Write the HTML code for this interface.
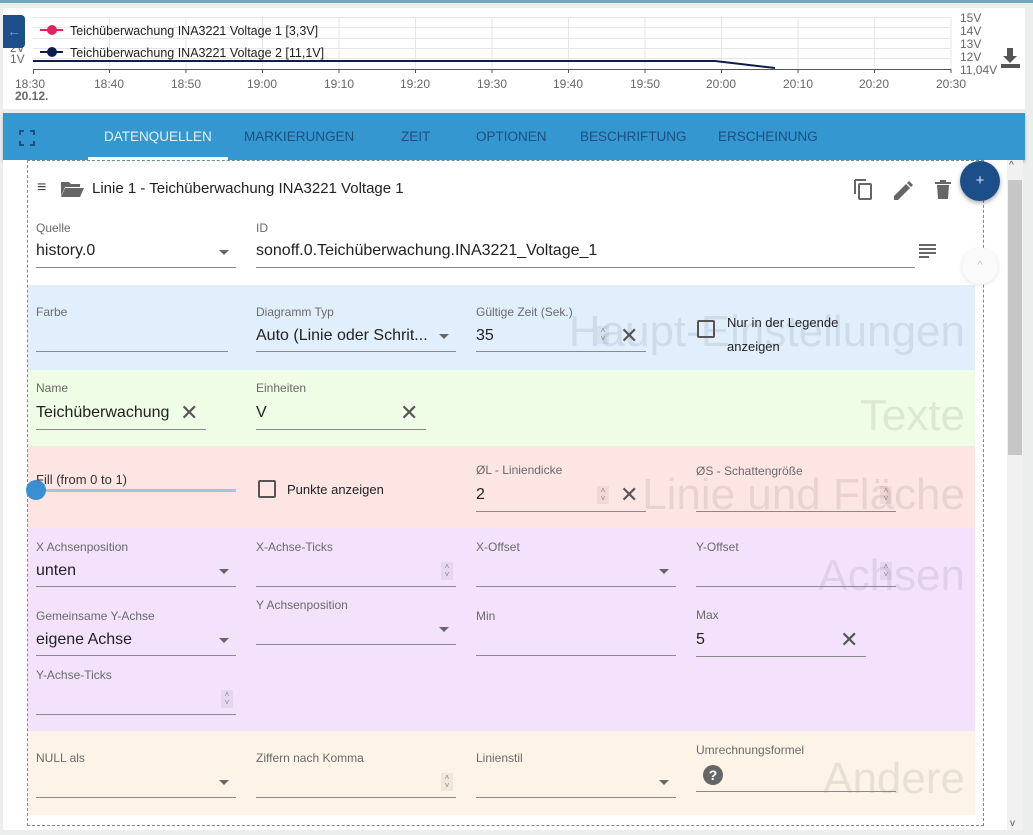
<!DOCTYPE html>
<html><head><meta charset="utf-8"><style>
*{margin:0;padding:0;box-sizing:border-box}
body{width:1033px;height:835px;overflow:hidden;background:#eceeee;font-family:"Liberation Sans",Arial,sans-serif;position:relative}
.a{position:absolute}
.lbl{position:absolute;font-size:12px;color:#6a6a6a;white-space:nowrap}
.val{position:absolute;font-size:16px;color:#222;white-space:nowrap}
.ul{position:absolute;height:1px;background:#8a8a8a}
.arr{position:absolute;width:0;height:0;border-left:5px solid transparent;border-right:5px solid transparent;border-top:5px solid #666}
.x{position:absolute;font-size:22px;color:#555;line-height:20px;font-weight:300}
.sp{position:absolute;width:12px;height:18px;background:rgba(0,0,0,0.05);font-size:8px;color:#888;text-align:center;line-height:8px;padding-top:1px}
.wm{position:absolute;right:68px;font-size:44px;color:rgba(0,0,0,0.08);white-space:nowrap}
.tab{position:absolute;top:129px;font-size:13.5px;color:#1d4f80;letter-spacing:0}
.cb{position:absolute;width:18px;height:18px;border:2px solid #555;border-radius:2px}
</style></head><body>
<div class="a" style="left:0;top:0;width:1033px;height:3px;background:#6fa8b8"></div>
<div class="a" style="left:3px;top:8px;width:1022px;height:101px;background:#fff"></div>
<svg class="a" style="left:0;top:0" width="1033" height="110">
<g stroke="#e6e6e6" stroke-width="1">
<line x1="33" y1="17.5" x2="951" y2="17.5"/><line x1="33" y1="27.5" x2="951" y2="27.5"/><line x1="33" y1="38.5" x2="951" y2="38.5"/><line x1="33" y1="48.5" x2="951" y2="48.5"/><line x1="33" y1="58.5" x2="951" y2="58.5"/>
<line x1="109.5" y1="17" x2="109.5" y2="69"/><line x1="186" y1="17" x2="186" y2="69"/><line x1="262.5" y1="17" x2="262.5" y2="69"/><line x1="339" y1="17" x2="339" y2="69"/><line x1="415.5" y1="17" x2="415.5" y2="69"/><line x1="492" y1="17" x2="492" y2="69"/><line x1="568.5" y1="17" x2="568.5" y2="69"/><line x1="645" y1="17" x2="645" y2="69"/><line x1="721.5" y1="17" x2="721.5" y2="69"/><line x1="798" y1="17" x2="798" y2="69"/><line x1="874.5" y1="17" x2="874.5" y2="69"/><line x1="951" y1="17" x2="951" y2="69"/>
</g>
<line x1="33" y1="69.5" x2="951" y2="69.5" stroke="#555"/>
<g stroke="#555"><line x1="33.5" y1="69" x2="33.5" y2="74"/><line x1="109.5" y1="69" x2="109.5" y2="73"/><line x1="186" y1="69" x2="186" y2="73"/><line x1="262.5" y1="69" x2="262.5" y2="73"/><line x1="339" y1="69" x2="339" y2="73"/><line x1="415.5" y1="69" x2="415.5" y2="73"/><line x1="492" y1="69" x2="492" y2="73"/><line x1="568.5" y1="69" x2="568.5" y2="73"/><line x1="645" y1="69" x2="645" y2="73"/><line x1="721.5" y1="69" x2="721.5" y2="73"/><line x1="798" y1="69" x2="798" y2="73"/><line x1="874.5" y1="69" x2="874.5" y2="73"/><line x1="951" y1="69" x2="951" y2="73"/></g>
<polyline points="33,61 715,61 775,68" fill="none" stroke="#0e1e4a" stroke-width="2"/>
<line x1="40" y1="30" x2="63" y2="30" stroke="#e0245e" stroke-width="2"/><circle cx="52" cy="30" r="5" fill="#e0245e"/>
<line x1="40" y1="52" x2="63" y2="52" stroke="#0e1e4a" stroke-width="2"/><circle cx="52" cy="52" r="5" fill="#0e1e4a"/>
<g font-family="Liberation Sans" font-size="12" fill="#666">
<text x="10" y="52">2V</text><text x="10" y="63">1V</text>
<text x="15" y="88">18:30</text><text x="94" y="88">18:40</text><text x="171" y="88">18:50</text><text x="247" y="88">19:00</text><text x="324" y="88">19:10</text><text x="400" y="88">19:20</text><text x="477" y="88">19:30</text><text x="553" y="88">19:40</text><text x="630" y="88">19:50</text><text x="706" y="88">20:00</text><text x="783" y="88">20:10</text><text x="859" y="88">20:20</text><text x="936" y="88">20:30</text>
<text x="960" y="22">15V</text><text x="960" y="35">14V</text><text x="960" y="48">13V</text><text x="960" y="61">12V</text><text x="960" y="74">11,04V</text>
</g>
<text x="15" y="100" font-family="Liberation Sans" font-size="12" font-weight="bold" fill="#666">20.12.</text>
<g font-family="Liberation Sans" font-size="12.5" fill="#222"><text x="70" y="35">Teichüberwachung INA3221 Voltage  1 [3,3V]</text><text x="70" y="57">Teichüberwachung INA3221 Voltage  2 [11,1V]</text></g>
<path d="M1007 48h6v8h4l-7 7-7-7h4z" fill="#555"/><rect x="1001" y="64" width="19" height="4" fill="#555"/>
</svg>
<div class="a" style="left:3px;top:15px;width:22px;height:33px;background:#1c4f8a;border-radius:0 4px 4px 0;color:#6aa8e0;font-size:14px;text-align:center;line-height:32px">←</div>
<div class="a" style="left:3px;top:113px;width:1022px;height:47px;background:#3497d0;box-shadow:0 2px 3px rgba(0,0,0,.25)"></div>
<svg class="a" style="left:19px;top:130px" width="16" height="16"><path d="M1 5V1h4M11 1h4v4M15 11v4h-4M5 15H1v-4" fill="none" stroke="#1d4f80" stroke-width="2"/></svg>
<div class="tab" style="left:104px;color:#e2f2ff">DATENQUELLEN</div>
<div class="a" style="left:88px;top:157px;width:140px;height:3px;background:#fff"></div>
<div class="tab" style="left:244px">MARKIERUNGEN</div>
<div class="tab" style="left:401px">ZEIT</div>
<div class="tab" style="left:476px">OPTIONEN</div>
<div class="tab" style="left:580px">BESCHRIFTUNG</div>
<div class="tab" style="left:718px">ERSCHEINUNG</div>
<div class="a" style="left:3px;top:160px;width:1005px;height:670px;background:#fff"></div>
<div class="a" style="left:1007px;top:160px;width:16px;height:670px;background:#f1f1f1"></div>
<div class="a" style="left:1008px;top:180px;width:14px;height:275px;background:#c6c6c6"></div>
<div class="a" style="left:1009px;top:160px;font-size:10px;color:#555">^</div>
<div class="a" style="left:1010px;top:818px;font-size:10px;color:#555">v</div>
<div class="a" style="left:27px;top:160px;width:957px;height:666px;border:1px dashed #888;border-top-color:#6a8aa0"></div>
<div class="a" style="left:28px;top:285px;width:947px;height:85px;background:#e1eefc"></div>
<div class="a" style="left:28px;top:370px;width:947px;height:76px;background:#effce6"></div>
<div class="a" style="left:28px;top:446px;width:947px;height:82px;background:#fde5e3"></div>
<div class="a" style="left:28px;top:528px;width:947px;height:203px;background:#f4e2fc"></div>
<div class="a" style="left:28px;top:731px;width:947px;height:84px;background:#fdf3e6"></div>
<div class="wm" style="top:307px">Haupt-Einstellungen</div>
<div class="wm" style="top:391px">Texte</div>
<div class="wm" style="top:470px">Linie und Fläche</div>
<div class="wm" style="top:551px">Achsen</div>
<div class="wm" style="top:754px;right:68px">Andere</div>
<div class="a" style="left:37px;top:179px;font-size:16px;color:#444">≡</div>
<svg class="a" style="left:60px;top:180px" width="25" height="18"><path d="M1 2h8l2 2h9v3H5L1 16z" fill="#666"/><path d="M5 8h19l-4 9H1z" fill="#666"/></svg>
<div class="a" style="left:92px;top:180px;font-size:15px;color:#222">Linie 1 - Teichüberwachung INA3221 Voltage 1</div>
<svg class="a" style="left:852px;top:178px" width="22" height="24"><path d="M3 2h11M3 2v14" stroke="#666" stroke-width="2" fill="none"/><rect x="7" y="6" width="12" height="15" rx="1" stroke="#666" stroke-width="2" fill="none"/></svg>
<svg class="a" style="left:892px;top:180px" width="22" height="22"><path d="M2 20v-4L14 4l4 4L6 20z" fill="#666"/><path d="M15 3l2-2 4 4-2 2z" fill="#666"/></svg>
<svg class="a" style="left:934px;top:179px" width="18" height="22"><rect x="1" y="3" width="16" height="2" fill="#666"/><rect x="6" y="1" width="6" height="2" fill="#666"/><path d="M3 6h12l-1 14H4z" fill="#666"/></svg>
<div class="a" style="left:960px;top:161px;width:40px;height:40px;border-radius:50%;background:#1c4f8a;box-shadow:0 2px 5px rgba(0,0,0,.35);color:#cfe4ff;text-align:center;line-height:40px;font-size:15px">+</div>
<div class="a" style="left:962px;top:248px;width:36px;height:36px;border-radius:50%;background:#fafafa;box-shadow:0 1px 4px rgba(0,0,0,.12);color:#bbb;text-align:center;line-height:36px;font-size:10px">^</div>
<div class="lbl" style="left:36px;top:221px">Quelle</div><div class="val" style="left:36px;top:242px">history.0</div><div class="arr" style="left:219px;top:250px"></div><div class="ul" style="left:36px;top:267px;width:200px"></div>
<div class="lbl" style="left:256px;top:221px">ID</div><div class="val" style="left:256px;top:242px">sonoff.0.Teichüberwachung.INA3221_Voltage_1</div><div class="ul" style="left:256px;top:267px;width:659px"></div>
<svg class="a" style="left:919px;top:243px" width="18" height="16"><g fill="#666"><rect y="1" width="17" height="2"/><rect y="5" width="17" height="2"/><rect y="9" width="17" height="2"/><rect y="13" width="10" height="2"/></g></svg>
<div class="lbl" style="left:36px;top:305px">Farbe</div><div class="ul" style="left:36px;top:351px;width:192px"></div>
<div class="lbl" style="left:256px;top:305px">Diagramm Typ</div><div class="val" style="left:256px;top:327px">Auto (Linie oder Schrit...</div><div class="arr" style="left:439px;top:334px"></div><div class="ul" style="left:256px;top:351px;width:200px"></div>
<div class="lbl" style="left:476px;top:305px">Gültige Zeit (Sek.)</div><div class="val" style="left:476px;top:327px">35</div><div class="sp" style="left:597px;top:326px">˄<br>˅</div><div class="x" style="left:620px;top:326px">✕</div><div class="ul" style="left:476px;top:351px;width:170px"></div>
<div class="cb" style="left:697px;top:320px"></div><div class="a" style="left:727px;top:311px;font-size:13px;color:#222;line-height:24px">Nur in der Legende<br>anzeigen</div>
<div class="lbl" style="left:36px;top:381px">Name</div><div class="val" style="left:36px;top:404px">Teichüberwachung</div><div class="x" style="left:180px;top:403px">✕</div><div class="ul" style="left:36px;top:429px;width:170px"></div>
<div class="lbl" style="left:256px;top:381px">Einheiten</div><div class="val" style="left:256px;top:404px">V</div><div class="x" style="left:400px;top:403px">✕</div><div class="ul" style="left:256px;top:429px;width:170px"></div>
<div class="a" style="left:36px;top:472px;font-size:13px;color:#333">Fill (from 0 to 1)</div>
<div class="a" style="left:36px;top:489px;width:200px;height:3px;background:#a8c4dc"></div>
<div class="a" style="left:26px;top:480px;width:20px;height:20px;border-radius:50%;background:#3a8fd0"></div>
<div class="cb" style="left:258px;top:480px"></div><div class="a" style="left:287px;top:482px;font-size:13px;color:#222">Punkte anzeigen</div>
<div class="lbl" style="left:476px;top:463px">ØL - Liniendicke</div><div class="val" style="left:476px;top:486px">2</div><div class="sp" style="left:597px;top:486px">˄<br>˅</div><div class="x" style="left:620px;top:485px">✕</div><div class="ul" style="left:476px;top:511px;width:170px"></div>
<div class="lbl" style="left:696px;top:464px">ØS - Schattengröße</div><div class="sp" style="left:880px;top:486px">˄<br>˅</div><div class="ul" style="left:696px;top:511px;width:200px"></div>
<div class="lbl" style="left:36px;top:540px">X Achsenposition</div><div class="val" style="left:36px;top:562px">unten</div><div class="arr" style="left:219px;top:569px"></div><div class="ul" style="left:36px;top:586px;width:200px"></div>
<div class="lbl" style="left:256px;top:540px">X-Achse-Ticks</div><div class="sp" style="left:441px;top:562px">˄<br>˅</div><div class="ul" style="left:256px;top:586px;width:200px"></div>
<div class="lbl" style="left:476px;top:540px">X-Offset</div><div class="arr" style="left:659px;top:569px"></div><div class="ul" style="left:476px;top:586px;width:200px"></div>
<div class="lbl" style="left:696px;top:540px">Y-Offset</div><div class="sp" style="left:880px;top:562px">˄<br>˅</div><div class="ul" style="left:696px;top:586px;width:200px"></div>
<div class="lbl" style="left:36px;top:609px">Gemeinsame Y-Achse</div><div class="val" style="left:36px;top:631px">eigene Achse</div><div class="arr" style="left:219px;top:638px"></div><div class="ul" style="left:36px;top:655px;width:200px"></div>
<div class="lbl" style="left:256px;top:598px">Y Achsenposition</div><div class="arr" style="left:439px;top:627px"></div><div class="ul" style="left:256px;top:644px;width:200px"></div>
<div class="lbl" style="left:476px;top:609px">Min</div><div class="ul" style="left:476px;top:655px;width:200px"></div>
<div class="lbl" style="left:696px;top:608px">Max</div><div class="val" style="left:696px;top:631px">5</div><div class="x" style="left:840px;top:630px">✕</div><div class="ul" style="left:696px;top:656px;width:170px"></div>
<div class="lbl" style="left:36px;top:668px">Y-Achse-Ticks</div><div class="sp" style="left:221px;top:690px">˄<br>˅</div><div class="ul" style="left:36px;top:714px;width:200px"></div>
<div class="lbl" style="left:36px;top:751px">NULL als</div><div class="arr" style="left:219px;top:780px"></div><div class="ul" style="left:36px;top:797px;width:200px"></div>
<div class="lbl" style="left:256px;top:751px">Ziffern nach Komma</div><div class="sp" style="left:441px;top:773px">˄<br>˅</div><div class="ul" style="left:256px;top:797px;width:200px"></div>
<div class="lbl" style="left:476px;top:751px">Linienstil</div><div class="arr" style="left:659px;top:780px"></div><div class="ul" style="left:476px;top:797px;width:200px"></div>
<div class="lbl" style="left:696px;top:743px">Umrechnungsformel</div>
<div class="a" style="left:703px;top:765px;width:20px;height:20px;border-radius:50%;background:#666;color:#fff;font-size:14px;font-weight:bold;text-align:center;line-height:20px">?</div>
<div class="ul" style="left:696px;top:791px;width:200px"></div>
</body></html>
